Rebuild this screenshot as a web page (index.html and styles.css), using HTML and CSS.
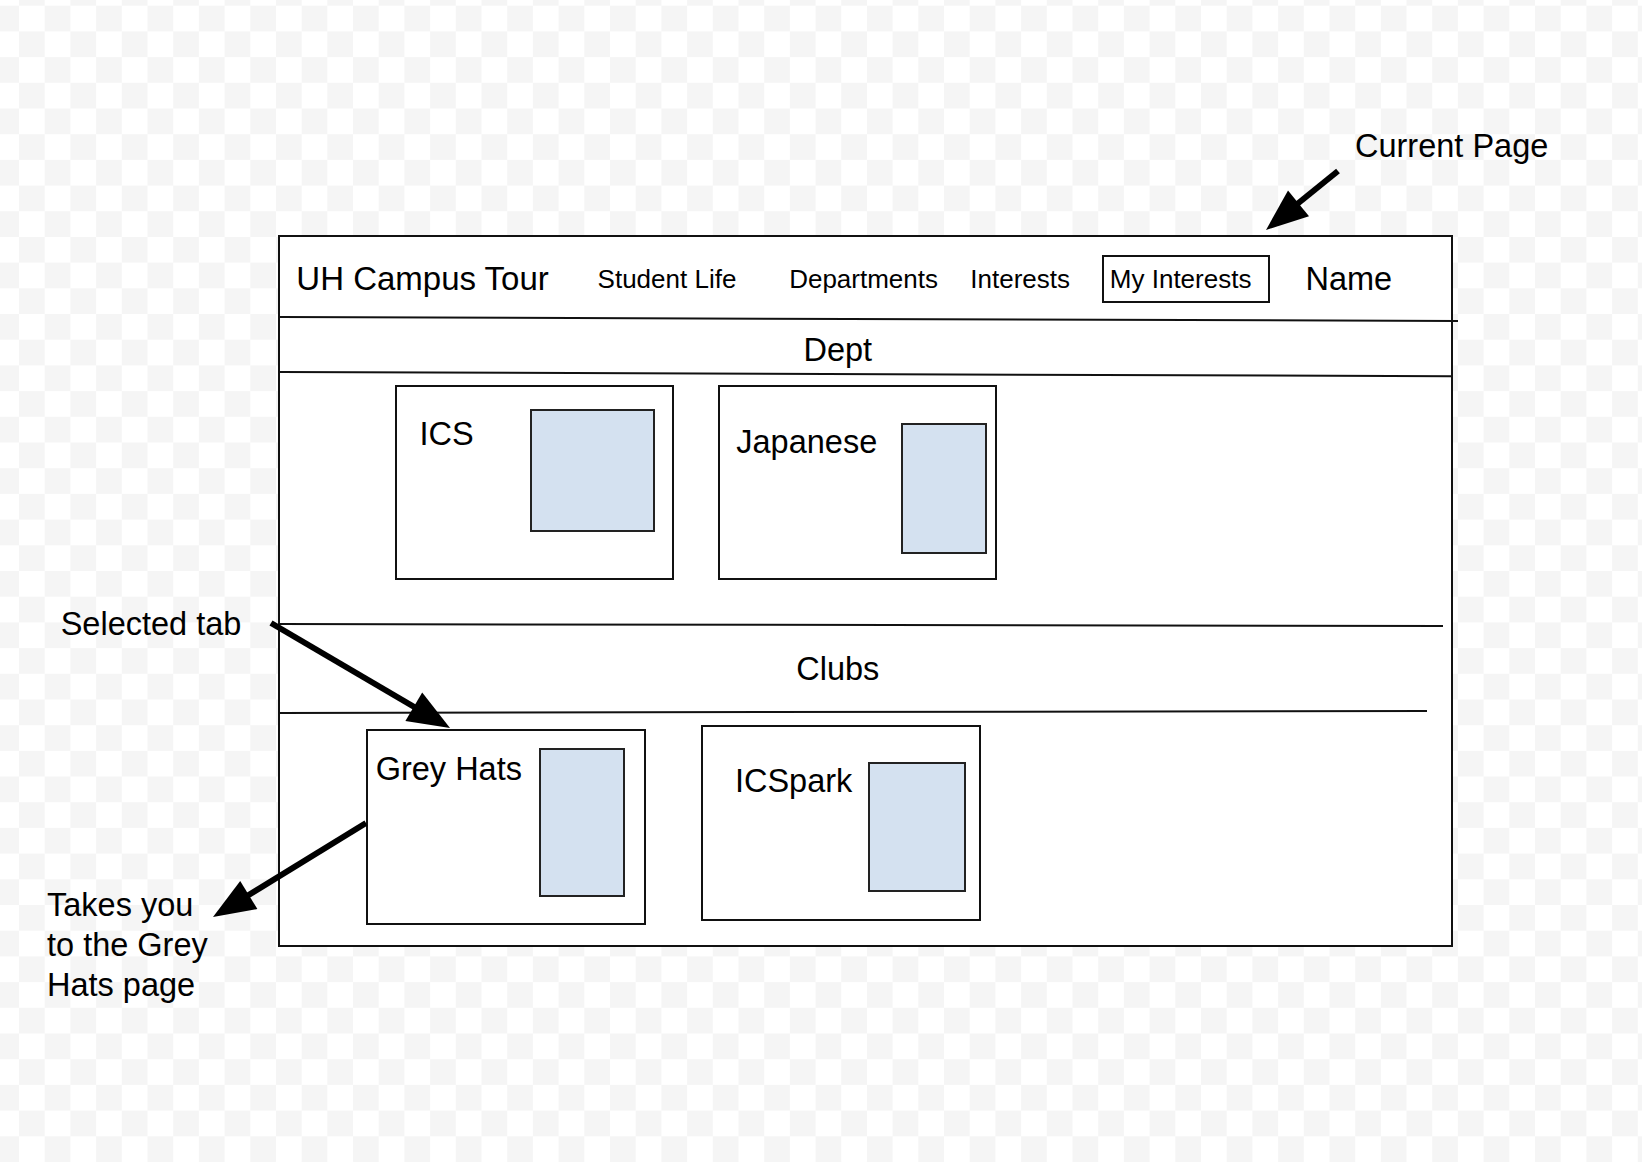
FILE: index.html
```html
<!DOCTYPE html>
<html lang="en">
<head>
    <meta charset="UTF-8">
    <meta name="viewport" content="width=device-width, initial-scale=1.0">
    <title>UH Campus Tour - Wireframe</title>
    <link rel="stylesheet" href="styles.css">
</head>
<body>
    <div class="canvas">
        <!-- Wireframe of the page -->
        <div class="mockup">
            <div class="topbar">
                <span class="brand">UH Campus Tour</span>
                <span class="nav-item nav-item--life">Student Life</span>
                <span class="nav-item nav-item--dept">Departments</span>
                <span class="nav-item">Interests</span>
                <span class="nav-item nav-item--current">My Interests</span>
                <span class="nav-item nav-item--name">Name</span>
            </div>
            <div class="rule rule--1"></div>

            <div class="section-title section-title--dept">Dept</div>
            <div class="rule rule--2"></div>

            <div class="card-row card-row--dept">
                <div class="card card--ics">
                    <span class="card-title">ICS</span>
                    <div class="thumb"></div>
                </div>
                <div class="card card--japanese">
                    <span class="card-title">Japanese</span>
                    <div class="thumb"></div>
                </div>
            </div>

            <div class="rule rule--3"></div>
            <div class="section-title section-title--clubs">Clubs</div>
            <div class="rule rule--4"></div>

            <div class="card-row card-row--clubs">
                <div class="card card--greyhats">
                    <span class="card-title">Grey Hats</span>
                    <div class="thumb"></div>
                </div>
                <div class="card card--icspark">
                    <span class="card-title">ICSpark</span>
                    <div class="thumb"></div>
                </div>
            </div>
        </div>

        <!-- Annotations -->
        <div class="note note--page">Current Page</div>
        <div class="note note--tab">Selected tab</div>
        <div class="note note--link">Takes you<br>to the Grey<br>Hats page</div>

        <svg class="arrows" width="1642" height="1162" viewBox="0 0 1642 1162">
            <line x1="1338" y1="171" x2="1296" y2="205"/>
            <polygon points="1266,230 1309,216.2 1288,190.6"/>
            <line x1="271" y1="623" x2="416" y2="708"/>
            <polygon points="450,728 405.4,720.9 422.2,692.5"/>
            <line x1="366" y1="823" x2="247" y2="896"/>
            <polygon points="213,917 257.4,909.1 240.2,880.9"/>
        </svg>
    </div>
</body>
</html>
```

FILE: styles.css
```css
body {
    margin: 0;
    font-family: "Liberation Sans", Arial, sans-serif;
    color: #000;
}
.canvas {
    position: relative;
    width: 1642px;
    height: 1162px;
    box-sizing: border-box;
    padding: 234.6px 0 0 278.3px;
    overflow: hidden;
    background-color: #fff;
    background-image: repeating-conic-gradient(#f5f5f5 0 25%, #fff 0 50%);
    background-size: 51.4px 51.4px;
    background-position: 19px 5.7px;
}
.mockup {
    width: 1175px;
    height: 712px;
    box-sizing: border-box;
    border: 2px solid #111;
    background: #fff;
    display: flex;
    flex-direction: column;
}
.mockup > * {
    flex: none;
}

/* top bar */
.topbar {
    height: 79px;
    box-sizing: border-box;
    padding: 6px 0 0 16px;
    display: flex;
    align-items: center;
    font-size: 26px;
    white-space: nowrap;
}
.brand {
    font-size: 33px;
}
.nav-item {
    margin-left: 32.3px;
}
.nav-item--life {
    margin-left: 48.8px;
}
.nav-item--dept {
    margin-left: 52.8px;
}
.nav-item--current {
    width: 167.5px;
    height: 48px;
    box-sizing: border-box;
    border: 2px solid #111;
    padding-left: 5.5px;
    display: flex;
    align-items: center;
}
.nav-item--name {
    margin-left: 35.6px;
    font-size: 32.5px;
}

/* dividers */
.rule {
    height: 2px;
    background: #111;
    transform-origin: 0 50%;
}
.rule--1 {
    width: 1178px;
    transform: rotate(0.194deg);
}
.rule--2 {
    width: 1171px;
    transform: rotate(0.205deg);
}
.rule--3 {
    width: 1163px;
    transform: rotate(0.103deg);
}
.rule--4 {
    width: 1147px;
    transform: rotate(-0.105deg);
}

/* section headings */
.section-title {
    font-size: 32.5px;
    text-align: center;
    padding-right: 56px;
    box-sizing: border-box;
}
.section-title--dept {
    height: 53px;
    padding-top: 14px;
    line-height: 37px;
}
.section-title--clubs {
    height: 87px;
    padding-top: 2px;
    line-height: 84px;
}

/* cards */
.card-row {
    display: flex;
    align-items: flex-start;
}
.card-row--dept {
    padding: 12.8px 0 43px 115.2px;
    gap: 44px;
}
.card-row--clubs {
    padding: 10.6px 0 0 86px;
    gap: 55.5px;
}
.card {
    display: flex;
    align-items: flex-start;
    flex: none;
    box-sizing: border-box;
    width: 279px;
    height: 195px;
    border: 2px solid #111;
    background: #fff;
}
.card-title {
    font-size: 32.5px;
    line-height: 37px;
    white-space: nowrap;
}
.thumb {
    flex: none;
    margin-left: auto;
    box-sizing: border-box;
    border: 2px solid #222;
    background: #d4e1f0;
}
.card--ics .card-title {
    margin: 29px 0 0 22px;
}
.card--ics .thumb {
    margin: 22px 17.9px 0 auto;
    width: 124.6px;
    height: 122.5px;
}
.card--japanese .card-title {
    margin: 36.8px 0 0 15.8px;
}
.card--japanese .thumb {
    margin: 35.6px 8.4px 0 auto;
    width: 86px;
    height: 131px;
}
.card--greyhats {
    margin-top: 4.2px;
    width: 279.6px;
    height: 195.8px;
}
.card--greyhats .card-title {
    margin: 20px 0 0 7.4px;
}
.card--greyhats .thumb {
    margin: 16.8px 18.9px 0 auto;
    width: 86px;
    height: 148.7px;
}
.card--icspark {
    width: 279.6px;
    height: 195.8px;
}
.card--icspark .card-title {
    margin: 36.5px 0 0 31.5px;
}
.card--icspark .thumb {
    margin: 34.6px 12.7px 0 auto;
    width: 98.4px;
    height: 130.9px;
}

/* annotations */
.note {
    position: absolute;
    font-size: 32.5px;
    line-height: 37px;
    white-space: nowrap;
}
.note--page {
    left: 1355px;
    top: 127.5px;
}
.note--tab {
    left: 60.7px;
    top: 606px;
}
.note--link {
    left: 47px;
    top: 886px;
    line-height: 39.8px;
}
.arrows {
    position: absolute;
    left: 0;
    top: 0;
    pointer-events: none;
}
.arrows line {
    stroke: #000;
    stroke-width: 6;
}
.arrows polygon {
    fill: #000;
}
```
